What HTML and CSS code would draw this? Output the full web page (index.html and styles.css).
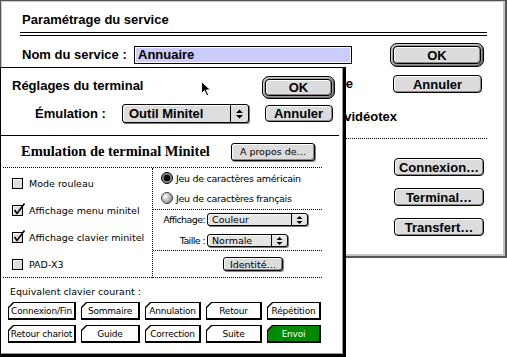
FILE: index.html
```html
<!DOCTYPE html>
<html lang="fr">

<head>
    <meta charset="UTF-8">
    <meta name="viewport" content="width=device-width, initial-scale=1.0">
    <title>Paramétrage du service</title>
    <link rel="stylesheet" href="styles.css">
</head>

<body>
    <div class="desk">
        <!-- fenetre arriere -->
        <div class="win back">
            <div class="back-title">Paramétrage du service</div>
            <div class="double-rule"></div>
            <div class="back-row row-name">
                <span class="label">Nom du service :</span>
                <span class="field"><span class="field-sel">Annuaire</span></span>
                <span class="default-ring ok-back"><span class="btn">OK</span></span>
            </div>
            <div class="back-row row-auto">
                <span class="opt">Ligne</span>
                <span class="btn cancel-back">Annuler</span>
            </div>
            <div class="back-row row-vtx">
                <span class="opt">vidéotex</span>
            </div>
            <div class="dotted-rule"></div>
            <div class="back-actions">
                <span class="btn action">Connexion…</span>
                <span class="btn action">Terminal…</span>
                <span class="btn action">Transfert…</span>
            </div>
        </div>

        <!-- fenetre de devant -->
        <div class="win front">
            <div class="front-top">
                <div class="front-head">
                    <div class="front-title">Réglages du terminal</div>
                    <div class="emu-row">
                        <span class="emu-label">Émulation :</span>
                        <span class="popup popup-big">
                            <span class="popup-text">Outil Minitel</span>
                            <span class="popup-arrow">
                                <svg width="7" height="10" viewBox="0 0 7 10"><path d="M0 4 3.5 0.5 7 4Z M0 6 3.5 9.5 7 6Z" fill="#000"/></svg>
                            </span>
                        </span>
                    </div>
                </div>
                <div class="front-buttons">
                    <span class="default-ring ok-front"><span class="btn">OK</span></span>
                    <span class="btn cancel-front">Annuler</span>
                </div>
            </div>
            <div class="solid-rule"></div>

            <div class="minitel">
                <div class="minitel-head">
                    <span class="serif-title">Emulation de terminal Minitel</span>
                    <span class="btn btn-small about">A propos de…</span>
                </div>
                <div class="minitel-grid">
                    <div class="checks">
                        <div class="check-row">
                            <svg class="cb" width="14" height="13" viewBox="0 0 14 13"><rect x="0.5" y="2.5" width="10" height="10" fill="#ddd" stroke="#000"/><path d="M1.5 11V3.5H9.5" stroke="#fff" fill="none"/></svg>
                            <span>Mode rouleau</span>
                        </div>
                        <div class="check-row">
                            <svg class="cb" width="14" height="13" viewBox="0 0 14 13"><rect x="0.5" y="2.5" width="10" height="10" fill="#ddd" stroke="#000"/><path d="M1.5 11V3.5H9.5" stroke="#fff" fill="none"/><path d="M2.5 7 5 10.5 12.5 0.5" stroke="#000" stroke-width="1.6" fill="none"/></svg>
                            <span>Affichage menu minitel</span>
                        </div>
                        <div class="check-row">
                            <svg class="cb" width="14" height="13" viewBox="0 0 14 13"><rect x="0.5" y="2.5" width="10" height="10" fill="#ddd" stroke="#000"/><path d="M1.5 11V3.5H9.5" stroke="#fff" fill="none"/><path d="M2.5 7 5 10.5 12.5 0.5" stroke="#000" stroke-width="1.6" fill="none"/></svg>
                            <span>Affichage clavier minitel</span>
                        </div>
                        <div class="check-row">
                            <svg class="cb" width="14" height="13" viewBox="0 0 14 13"><rect x="0.5" y="2.5" width="10" height="10" fill="#ddd" stroke="#000"/><path d="M1.5 11V3.5H9.5" stroke="#fff" fill="none"/></svg>
                            <span>PAD-X3</span>
                        </div>
                    </div>
                    <div class="opts">
                        <div class="radios">
                            <div class="radio-row">
                                <svg width="12" height="12" viewBox="0 0 12 12"><circle cx="6" cy="6" r="5.5" fill="#8c8c8c" stroke="#000"/><circle cx="6" cy="6" r="3.3" fill="#000"/></svg>
                                <span>Jeu de caractères américain</span>
                            </div>
                            <div class="radio-row">
                                <svg width="12" height="12" viewBox="0 0 12 12"><defs><radialGradient id="rg" cx="0.35" cy="0.35" r="0.7"><stop offset="0" stop-color="#fff"/><stop offset="1" stop-color="#888"/></radialGradient></defs><circle cx="6" cy="6" r="5.5" fill="url(#rg)" stroke="#444"/></svg>
                                <span>Jeu de caractères français</span>
                            </div>
                        </div>
                        <div class="display">
                            <span class="disp-label">Affichage:</span>
                            <span class="popup popup-small couleur">
                                <span class="popup-text">Couleur</span>
                                <span class="popup-arrow">
                                    <svg width="7" height="10" viewBox="0 0 7 10"><path d="M0.5 4 3.5 1 6.5 4Z M0.5 6 3.5 9 6.5 6Z" fill="#000"/></svg>
                                </span>
                            </span>
                            <span class="disp-label">Taille :</span>
                            <span class="popup popup-small normale">
                                <span class="popup-text">Normale</span>
                                <span class="popup-arrow">
                                    <svg width="7" height="10" viewBox="0 0 7 10"><path d="M0.5 4 3.5 1 6.5 4Z M0.5 6 3.5 9 6.5 6Z" fill="#000"/></svg>
                                </span>
                            </span>
                        </div>
                        <div class="ident">
                            <span class="btn btn-small ident-btn">Identité…</span>
                        </div>
                    </div>
                </div>
            </div>

            <div class="keys-label">Equivalent clavier courant :</div>
            <div class="keys">
                <span class="key"><span>Connexion/Fin</span></span>
                <span class="key"><span>Sommaire</span></span>
                <span class="key"><span>Annulation</span></span>
                <span class="key"><span>Retour</span></span>
                <span class="key"><span>Répétition</span></span>
                <span class="key"><span>Retour chariot</span></span>
                <span class="key"><span>Guide</span></span>
                <span class="key"><span>Correction</span></span>
                <span class="key"><span>Suite</span></span>
                <span class="key envoi"><span>Envoi</span></span>
            </div>
        </div>

        <!-- pointeur souris -->
        <svg class="cursor" width="11" height="16" viewBox="0 0 11 16"><path d="M0.5 0.5V12.5L3.5 9.7 5.8 14.8 7.7 14 5.4 9H9.5Z" fill="#000" stroke="#fff" stroke-width="1"/></svg>
    </div>
</body>

</html>
```

FILE: styles.css
```css
body {
    margin: 0;
    background: #fff;
}

.desk {
    position: relative;
    width: 507px;
    height: 357px;
    overflow: hidden;
    font-family: "Liberation Sans", Arial, sans-serif;
    color: #000;
}

.win {
    position: absolute;
    box-sizing: border-box;
    background: #fff;
}

/* ---- fenetre arriere ---- */
.back {
    left: 0;
    top: 0;
    width: 507px;
    height: 258px;
    border: 1px solid #555;
    border-width: 1px 2px 2px 1px;
    box-shadow: inset 1px 1px 0 #ccc, inset -2px -2px 0 #c4c4c4;
    padding: 11px 18px 0 21px;
}

.back-title,
.front-title,
.label,
.opt,
.emu-label {
    font-weight: bold;
    font-size: 13px;
    line-height: 16px;
    white-space: nowrap;
}

.double-rule {
    height: 2px;
    margin: 4px 0 0 -2px;
    border-top: 1px solid #000;
    border-bottom: 1px solid #000;
}

.back-row {
    display: flex;
    align-items: center;
}

.row-name {
    height: 24px;
    margin-top: 7px;
}

.label {
    width: 112px;
}

.field {
    display: flex;
    box-sizing: border-box;
    width: 218px;
    height: 18px;
    border: 1px solid #000;
    padding: 1px;
}

.field-sel {
    flex: 1;
    background: #ccccff;
    padding-left: 2px;
    font-weight: bold;
    font-size: 13px;
    line-height: 14px;
}

.default-ring {
    display: flex;
    box-sizing: border-box;
    padding: 2px;
    border: 1px solid #000;
    border-radius: 7px;
    background: #9a9a9a;
    box-shadow: inset 1px 1px 0 #d0d0d0, inset -1px -1px 0 #666;
}

.default-ring .btn {
    flex: 1;
}

.ok-back {
    width: 94px;
    height: 24px;
    margin-left: auto;
    margin-right: 3px;
}

.row-auto {
    height: 18px;
    margin-top: 8px;
}

.row-auto .opt {
    flex: 1;
    text-align: right;
    padding-right: 40px;
}

.cancel-back {
    width: 89px;
    height: 18px;
    margin-right: 5px;
}

.row-vtx {
    height: 16px;
    margin-top: 16px;
    justify-content: flex-end;
    padding-right: 90px;
}

.dotted-rule {
    margin: 13px 0 0 -1px;
    border-top: 1px dotted #000;
}

.back-actions {
    display: flex;
    flex-direction: column;
    align-items: flex-end;
    gap: 12px;
    margin: 19px 3px 0 0;
}

.action {
    width: 90px;
    height: 18px;
}

/* ---- boutons ---- */
.btn {
    display: flex;
    align-items: center;
    justify-content: center;
    box-sizing: border-box;
    border: 1px solid #000;
    border-radius: 4px;
    background: #dcdcdc;
    box-shadow: inset 1px 1px 0 #fff, inset -1px -1px 0 #8a8a8a;
    font-weight: bold;
    font-size: 13px;
    white-space: nowrap;
}

.btn-small {
    font-family: "DejaVu Sans", sans-serif;
    font-weight: normal;
    font-size: 9.5px;
    border-radius: 3px;
    box-shadow: inset 1px 1px 0 #fff, inset -1px -1px 0 #8a8a8a, 1px 1px 0 #888;
}

/* ---- fenetre de devant ---- */
.front {
    left: 0;
    top: 67px;
    width: 346px;
    height: 290px;
    border: 1px solid #000;
    border-right-width: 3px;
    border-bottom-width: 3px;
    box-shadow: inset -1px -1px 0 #999;
}

.front-top {
    display: flex;
    justify-content: space-between;
    box-sizing: border-box;
    height: 67px;
    padding: 8px 8px 0 11px;
}

.front-head {
    padding-top: 2px;
}

.emu-row {
    display: flex;
    align-items: center;
    margin-top: 10px;
}

.emu-label {
    width: 87px;
    padding-left: 23px;
}

.popup {
    display: flex;
    box-sizing: border-box;
    border: 1px solid #000;
    border-radius: 3px;
    background: #dddddd;
    box-shadow: inset 1px 1px 0 #fff, 1px 1px 0 #777;
}

.popup-text {
    flex: 1;
    display: flex;
    align-items: center;
    white-space: nowrap;
}

.popup-arrow {
    display: flex;
    align-items: center;
    justify-content: center;
    border-left: 1px solid #000;
}

.popup-big {
    width: 127px;
    height: 19px;
}

.popup-big .popup-text {
    padding-left: 6px;
    font-weight: bold;
    font-size: 13px;
}

.popup-big .popup-arrow {
    width: 17px;
}

.front-buttons {
    display: flex;
    flex-direction: column;
    align-items: center;
}

.ok-front {
    width: 73px;
    height: 23px;
}

.cancel-front {
    width: 68px;
    height: 17px;
    margin-top: 6px;
}

.solid-rule {
    margin-right: 4px;
    border-top: 1px solid #000;
}

.minitel {
    margin: 0 21px 0 2px;
}

.minitel-head {
    display: flex;
    align-items: center;
    justify-content: space-between;
    height: 31px;
    padding: 0 7px 0 18px;
}

.serif-title {
    font-family: "Liberation Serif", "Times New Roman", serif;
    font-weight: bold;
    font-size: 14.5px;
    white-space: nowrap;
}

.about {
    width: 84px;
    height: 18px;
}

.minitel-grid {
    display: grid;
    grid-template-columns: 150px 1fr;
    height: 111px;
    box-sizing: border-box;
    border-top: 1px dotted #000;
    border-bottom: 1px dotted #000;
}

.checks,
.opts,
.keys-label,
.keys {
    font-family: "DejaVu Sans", sans-serif;
    font-size: 9.5px;
}

.checks {
    border-right: 1px dotted #000;
    padding: 2px 0 0 9px;
}

.check-row {
    display: flex;
    align-items: center;
    gap: 3px;
    height: 27px;
    white-space: nowrap;
}

.check-row .cb {
    margin-top: -2px;
}

.radios {
    box-sizing: border-box;
    height: 42px;
    padding-left: 8px;
    border-bottom: 1px dotted #000;
}

.radio-row {
    display: flex;
    align-items: center;
    gap: 3px;
    height: 20px;
    white-space: nowrap;
    letter-spacing: -0.3px;
}

.display {
    display: grid;
    grid-template-columns: 52px auto;
    grid-auto-rows: 13px;
    row-gap: 8px;
    column-gap: 2px;
    align-items: center;
    box-sizing: border-box;
    height: 41px;
    padding-top: 3px;
    border-bottom: 1px dotted #000;
}

.disp-label {
    text-align: right;
    letter-spacing: -0.6px;
    white-space: nowrap;
}

.popup-small {
    height: 13px;
    background: #e4e4e4;
}

.popup-small .popup-text {
    padding-left: 4px;
}

.popup-small .popup-arrow {
    width: 15px;
}

.couleur {
    width: 101px;
}

.normale {
    width: 81px;
}

.ident {
    display: flex;
    align-items: center;
    height: 26px;
    padding-left: 70px;
}

.ident-btn {
    width: 60px;
    height: 14px;
}

.keys-label {
    margin-top: 7px;
    padding-left: 9px;
    line-height: 14px;
}

.keys {
    display: grid;
    grid-template-columns: 68px 59px 56px 56px 54px;
    grid-auto-rows: 18px;
    column-gap: 5px;
    row-gap: 5px;
    margin-top: 3px;
    padding-left: 7px;
    font-size: 9px;
}

.key {
    display: flex;
    box-sizing: border-box;
    padding: 1px 2px 2px 1px;
    background: #000;
    clip-path: polygon(5px 0, 100% 0, 100% 100%, 0 100%, 0 5px);
}

.key span {
    flex: 1;
    display: flex;
    align-items: center;
    justify-content: center;
    background: #fff;
    white-space: nowrap;
    letter-spacing: -0.2px;
    clip-path: polygon(5px 0, 100% 0, 100% 100%, 0 100%, 0 5px);
}

.key.envoi span {
    background: #008a00;
    color: #fff;
}

.cursor {
    position: absolute;
    left: 201px;
    top: 81px;
}
```
